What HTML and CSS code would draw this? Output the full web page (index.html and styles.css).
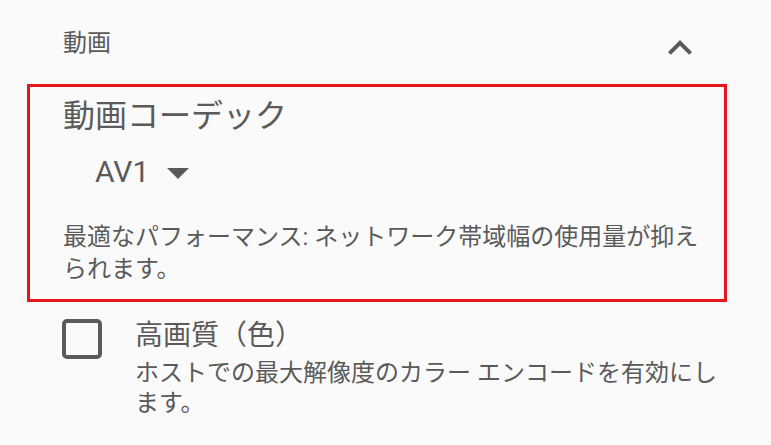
FILE: index.html
```html
<!DOCTYPE html>
<html lang="ja">
<head>
    <meta charset="UTF-8">
    <meta name="viewport" content="width=device-width, initial-scale=1.0">
    <title>動画</title>
    <link rel="stylesheet" href="styles.css">
</head>
<body>

<section class="group">
    <div class="group-header">
        <span class="group-title">動画</span>
        <svg class="chevron" width="48" height="48" viewBox="0 0 24 24">
            <path d="M12 8l-6 6 1.41 1.41L12 10.83l4.59 4.58L18 14z"/>
        </svg>
    </div>

    <!-- 動画コーデック -->
    <div class="pref pref-highlight">
        <div class="pref-title">動画コーデック</div>
        <div class="dropdown">
            <span class="dropdown-value">AV1</span>
            <svg class="dropdown-arrow" width="22" height="11" viewBox="0 0 22 11">
                <polygon points="0,0 22,0 11,11"/>
            </svg>
        </div>
        <p class="pref-summary">最適なパフォーマンス: ネットワーク帯域幅の使用量が抑えられます。</p>
    </div>

    <div class="pref-check">
        <div class="checkbox"></div>
        <div>
            <div class="check-title">高画質（色）</div>
            <p class="check-summary">ホストでの最大解像度のカラー エンコードを有効にします。</p>
        </div>
    </div>
</section>

</body>
</html>
```

FILE: styles.css
```css
body {
    margin: 0;
    padding: 0;
    background-color: #fafafa;
    color: #5a5a5a;
    font-family: Roboto, "Noto Sans CJK JP", sans-serif;
}
.group {
    padding-top: 24px;
}
.group-header {
    display: flex;
    justify-content: space-between;
    padding: 0 67px 0 63px;
}
.group-title {
    font-size: 24px;
    line-height: 38px;
}
.chevron {
    display: block;
    fill: #5a5a5a;
}
.pref-highlight {
    margin: 12px 44px 0 27px;
    padding: 9px 14px 14px 33px;
    border: 3px solid #e5161c;
}
.pref-title {
    font-size: 32px;
    line-height: 40px;
}
.dropdown {
    display: flex;
    align-items: center;
    gap: 18px;
    margin: 16px 0 0 32px;
}
.dropdown-value {
    font-size: 30px;
    line-height: 40px;
}
.dropdown-arrow {
    display: block;
    fill: #5a5a5a;
    margin-top: 3px;
}
.pref-summary {
    margin: 29px 0 0;
    font-size: 24px;
    line-height: 32px;
}
.pref-check {
    display: grid;
    grid-template-columns: 40px 1fr;
    gap: 33px;
    margin: 16px 44px 0 62px;
}
.checkbox {
    box-sizing: border-box;
    width: 40px;
    height: 40px;
    margin-top: 1px;
    border: 4px solid #5a5a5a;
    border-radius: 5px;
}
.check-title {
    font-size: 28px;
    line-height: 36px;
}
.check-summary {
    margin: 4px 0 0;
    font-size: 24px;
    line-height: 30px;
}
```
